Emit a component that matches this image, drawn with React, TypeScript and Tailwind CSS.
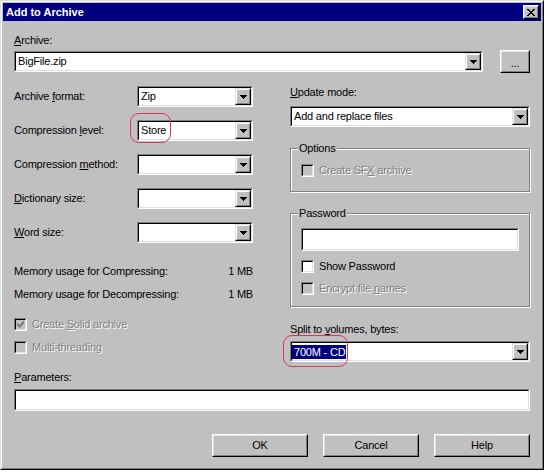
import type { ReactNode } from "react"

const sunkenOuter = "border border-t-[#808080] border-l-[#808080] border-r-white border-b-white"
const sunkenInner = "border border-t-black border-l-black border-r-[#dfdfdf] border-b-[#dfdfdf]"
const raisedOuter = "border border-t-white border-l-white border-r-black border-b-black"
const raisedInner = "border border-t-[#dfdfdf] border-l-[#dfdfdf] border-r-[#808080] border-b-[#808080]"
const disabledText = "text-[#808080] [text-shadow:1px_1px_0_#fff]"

function Arrow() {
  return (
    <svg width="7" height="4" viewBox="0 0 7 4" className="block" shapeRendering="crispEdges">
      <path d="M0 0h7v1H0zM1 1h5v1H1zM2 2h3v1H2zM3 3h1v1H3z" fill="#000" />
    </svg>
  )
}

function DropBtn() {
  return (
    <div className="w-[16px] h-full flex border border-t-[#dfdfdf] border-l-[#dfdfdf] border-r-black border-b-black">
      <div className="flex-1 flex items-center justify-center border border-t-white border-l-white border-r-[#808080] border-b-[#808080] bg-[#c0c0c0]">
        <Arrow />
      </div>
    </div>
  )
}

function Combo({
  w,
  value,
  selected = false,
  annot,
}: {
  w: string
  value?: string
  selected?: boolean
  annot?: string
}) {
  return (
    <div className={`relative h-[21px] flex ${sunkenOuter} ${w}`}>
      <div className={`flex-1 flex min-w-0 bg-white ${sunkenInner}`}>
        <div className="flex-1 flex items-center min-w-0">
          {value &&
            (selected ? (
              <span className="bg-[#000080] text-white pl-[2px] pr-[1px] leading-[14px]">{value}</span>
            ) : (
              <span className="pl-[2px]">{value}</span>
            ))}
        </div>
        <DropBtn />
      </div>
      {annot && <div className={`absolute border border-[#d63a55] rounded-[9px] ${annot}`} />}
    </div>
  )
}

function Edit({ w, h }: { w: string; h: string }) {
  return (
    <div className={`flex ${sunkenOuter} ${w} ${h}`}>
      <div className={`flex-1 bg-white ${sunkenInner}`} />
    </div>
  )
}

function PushBtn({ className, children }: { className: string; children: ReactNode }) {
  return (
    <div className={`flex ${raisedOuter} ${className}`}>
      <div className={`flex-1 flex items-center justify-center bg-[#c0c0c0] ${raisedInner}`}>{children}</div>
    </div>
  )
}

function Check({ checked = false, disabled = false }: { checked?: boolean; disabled?: boolean }) {
  return (
    <div className={`w-[13px] h-[13px] shrink-0 flex ${sunkenOuter}`}>
      <div
        className={`flex-1 flex items-center justify-center ${sunkenInner} ${
          disabled ? "bg-[#c0c0c0]" : "bg-white"
        }`}
      >
        {checked && (
          <svg width="7" height="7" viewBox="0 0 7 7" shapeRendering="crispEdges" className="block">
            <path
              d="M0 2h1v3H0zM1 3h1v3H1zM2 4h1v3H2zM3 3h1v3H3zM4 2h1v3H4zM5 1h1v3H5zM6 0h1v3H6z"
              fill={disabled ? "#808080" : "#000"}
            />
          </svg>
        )}
      </div>
    </div>
  )
}

function CheckRow({
  checked,
  disabled,
  children,
  className = "",
}: {
  checked?: boolean
  disabled?: boolean
  children: ReactNode
  className?: string
}) {
  return (
    <div className={`h-[13px] flex items-center gap-[5px] ${className}`}>
      <Check checked={checked} disabled={disabled} />
      <span className={disabled ? disabledText : ""}>{children}</span>
    </div>
  )
}

function Group({ title, className, children }: { title: string; className: string; children: ReactNode }) {
  return (
    <div className={`border border-[#808080] shadow-[inset_1px_1px_0_#fff,1px_1px_0_#fff] ${className}`}>
      <div className="-mt-[7px] ml-[7px] w-fit px-[1px] bg-[#c0c0c0]">{title}</div>
      {children}
    </div>
  )
}

function CloseBtn() {
  return (
    <PushBtn className="w-[16px] h-[14px]">
      <svg width="8" height="7" viewBox="0 0 8 7" shapeRendering="crispEdges" className="block -ml-[1px]">
        <path
          d="M0 0h2v1H0zM6 0h2v1H6zM1 1h2v1H1zM5 1h2v1H5zM2 2h4v1H2zM3 3h2v1H3zM2 4h4v1H2zM1 5h2v1H1zM5 5h2v1H5zM0 6h2v1H0zM6 6h2v1H6z"
          fill="#000"
        />
      </svg>
    </PushBtn>
  )
}

const leftRows: { label: ReactNode; value?: string; annot?: string }[] = [
  { label: <>Archive <u>f</u>ormat:</>, value: "Zip" },
  {
    label: <>Compression <u>l</u>evel:</>,
    value: "Store",
    annot: "-left-[8px] -top-[8px] w-[41px] h-[30px]",
  },
  { label: <>Compression <u>m</u>ethod:</> },
  { label: <><u>D</u>ictionary size:</> },
  { label: <><u>W</u>ord size:</> },
]

export default function App() {
  return (
    <div className="w-[549px] h-[472px] bg-white font-['Liberation_Sans',Arial,sans-serif] text-[11px] leading-[13px] tracking-[-0.2px] text-black">
      <div className="w-[544px] h-[470px] border border-t-[#dfdfdf] border-l-[#dfdfdf] border-r-black border-b-black">
        <div className="h-full p-[1px] bg-[#c0c0c0] border border-t-white border-l-white border-r-[#808080] border-b-[#808080]">
          <div className="h-[18px] bg-[#000080] flex items-center justify-between pl-[3px] pr-[2px]">
            <span className="text-white font-bold tracking-normal">Add to Archive</span>
            <CloseBtn />
          </div>

          <div className="pl-[11px] w-[527px]">
            <div className="mt-[13px]">
              <u>A</u>rchive:
            </div>
            <div className="mt-[3px] h-[23px] flex items-center justify-between">
              <Combo w="w-[469px]" value="BigFile.zip" />
              <PushBtn className="w-[30px] h-[23px]">
                <span className="pt-[3px]">...</span>
              </PushBtn>
            </div>

            <div className="mt-[13px] grid grid-cols-[239px_240px] gap-x-[37px] items-start">
              <div>
                <div className="flex flex-col gap-[13px]">
                  {leftRows.map((r, i) => (
                    <div key={i} className="h-[21px] flex items-center justify-between">
                      <span>{r.label}</span>
                      <Combo w="w-[116px]" value={r.value} annot={r.annot} />
                    </div>
                  ))}
                </div>
                <div className="mt-[22px] flex justify-between">
                  <span>Memory usage for Compressing:</span>
                  <span>1 MB</span>
                </div>
                <div className="mt-[10px] flex justify-between">
                  <span>Memory usage for Decompressing:</span>
                  <span>1 MB</span>
                </div>
                <CheckRow checked disabled className="mt-[17px]">
                  Create <u>S</u>olid archive
                </CheckRow>
                <CheckRow disabled className="mt-[10px]">
                  Multi-threading
                </CheckRow>
              </div>

              <div>
                <div>
                  <u>U</u>pdate mode:
                </div>
                <div className="mt-[7px]">
                  <Combo w="w-full" value="Add and replace files" />
                </div>
                <Group title="Options" className="mt-[21px] pb-[14px]">
                  <CheckRow disabled className="mt-[9px] ml-[10px]">
                    Create SF<u>X</u> archive
                  </CheckRow>
                </Group>
                <Group title="Password" className="mt-[21px] pb-[11px]">
                  <div className="mt-[8px] ml-[10px]">
                    <Edit w="w-[218px]" h="h-[23px]" />
                  </div>
                  <CheckRow className="mt-[9px] ml-[10px]">Show Password</CheckRow>
                  <CheckRow disabled className="mt-[9px] ml-[10px]">
                    Encrypt file <u>n</u>ames
                  </CheckRow>
                </Group>
                <div className="mt-[16px]">
                  Split to <u>v</u>olumes, bytes:
                </div>
                <div className="mt-[5px]">
                  <Combo
                    w="w-full"
                    value="700M - CD"
                    selected
                    annot="-left-[8px] -top-[7px] w-[65px] h-[32px]"
                  />
                </div>
              </div>
            </div>

            <div className="mt-[9px]">
              <u>P</u>arameters:
            </div>
            <div className="mt-[5px]">
              <Edit w="w-full" h="h-[22px]" />
            </div>

            <div className="mt-[23px] flex justify-end gap-[15px]">
              <PushBtn className="w-[96px] h-[23px]">OK</PushBtn>
              <PushBtn className="w-[96px] h-[23px]">Cancel</PushBtn>
              <PushBtn className="w-[96px] h-[23px]">Help</PushBtn>
            </div>
          </div>
        </div>
      </div>
    </div>
  )
}
